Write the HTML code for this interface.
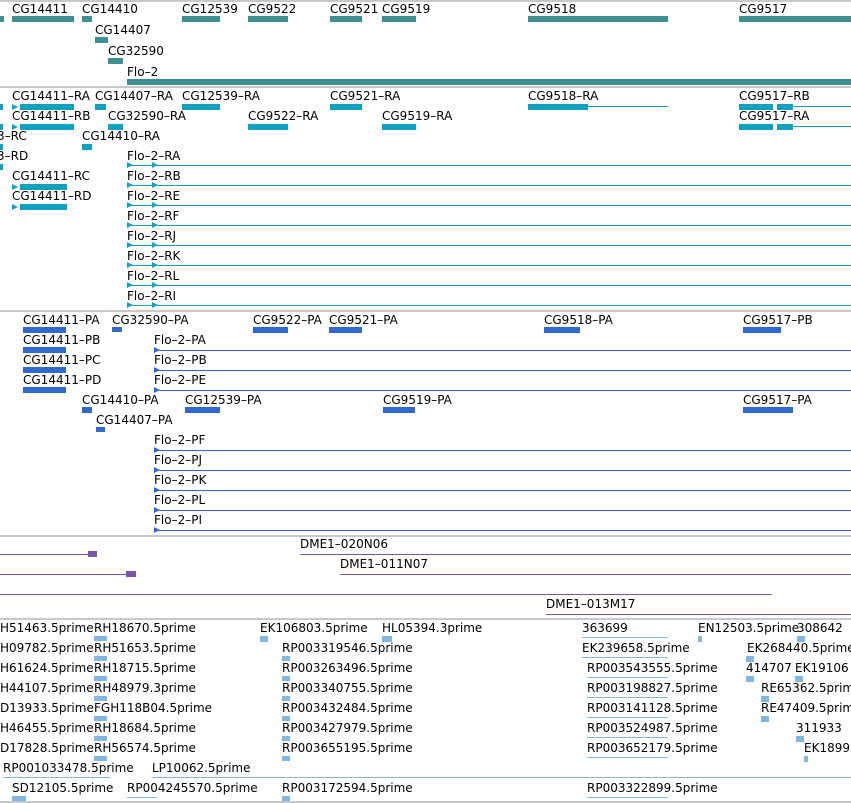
<!DOCTYPE html>
<html><head><meta charset="utf-8"><style>
html,body{margin:0;padding:0;background:#fff;width:851px;height:803px;overflow:hidden;position:relative}
.l{position:absolute;font-family:"DejaVu Sans","Liberation Sans",sans-serif;font-size:12px;line-height:14px;white-space:nowrap;color:#000}
.b{position:absolute;height:6px}
.n{position:absolute;height:1px}
.s{position:absolute;left:0;width:851px;height:2px;background:#c8c8c8}
.t1{background:#3f9191}.t2{background:#0ea0c0}.t3{background:#3068cc}.t4{background:#7755aa}.t5{background:#80b8e0}
.ar{position:absolute;width:0;height:0;border-top:3px solid transparent;border-bottom:3px solid transparent;border-left:6px solid #0ea0c0}
.ar3{position:absolute;width:0;height:0;border-top:3px solid transparent;border-bottom:3px solid transparent;border-left:6px solid #3068cc}
</style></head><body>
<div class="s" style="top:0"></div>
<div class="b t1" style="left:0;top:16px;width:4px"></div>
<div class="l" style="left:12px;top:2px">CG14411</div><div class="b t1" style="left:12px;top:16px;width:62px"></div>
<div class="l" style="left:82px;top:2px">CG14410</div><div class="b t1" style="left:82px;top:16px;width:10px"></div>
<div class="l" style="left:182px;top:2px">CG12539</div><div class="b t1" style="left:182px;top:16px;width:38px"></div>
<div class="l" style="left:248px;top:2px">CG9522</div><div class="b t1" style="left:248px;top:16px;width:40px"></div>
<div class="l" style="left:330px;top:2px">CG9521</div><div class="b t1" style="left:330px;top:16px;width:32px"></div>
<div class="l" style="left:382px;top:2px">CG9519</div><div class="b t1" style="left:382px;top:16px;width:34px"></div>
<div class="l" style="left:528px;top:2px">CG9518</div><div class="b t1" style="left:528px;top:16px;width:140px"></div>
<div class="l" style="left:739px;top:2px">CG9517</div><div class="b t1" style="left:739px;top:16px;width:112px"></div>
<div class="l" style="left:95px;top:23px">CG14407</div><div class="b t1" style="left:95px;top:37px;width:13px"></div>
<div class="l" style="left:108px;top:44px">CG32590</div><div class="b t1" style="left:108px;top:58px;width:15px"></div>
<div class="l" style="left:127px;top:65px">Flo–2</div><div class="b t1" style="left:127px;top:79px;width:724px"></div>
<div class="s" style="top:86px"></div>
<div class="b t2" style="left:0;top:104px;width:3px"></div>
<div class="l" style="left:12px;top:89px">CG14411–RA</div><div class="b t2" style="left:20px;top:104px;width:54px"></div><div class="ar" style="left:12px;top:104px"></div>
<div class="l" style="left:95px;top:89px">CG14407–RA</div><div class="b t2" style="left:95px;top:104px;width:11px"></div>
<div class="l" style="left:182px;top:89px">CG12539–RA</div><div class="b t2" style="left:182px;top:104px;width:38px"></div>
<div class="l" style="left:330px;top:89px">CG9521–RA</div><div class="b t2" style="left:330px;top:104px;width:32px"></div>
<div class="l" style="left:528px;top:89px">CG9518–RA</div><div class="b t2" style="left:528px;top:104px;width:60px"></div><div class="n t2" style="left:588px;top:106px;width:80px"></div>
<div class="l" style="left:739px;top:89px">CG9517–RB</div><div class="b t2" style="left:739px;top:104px;width:34px"></div><div class="b t2" style="left:777px;top:104px;width:16px"></div><div class="n t2" style="left:793px;top:106px;width:58px"></div>
<div class="b t2" style="left:0;top:124px;width:3px"></div>
<div class="l" style="left:12px;top:109px">CG14411–RB</div><div class="b t2" style="left:20px;top:124px;width:54px"></div><div class="ar" style="left:12px;top:124px"></div>
<div class="l" style="left:108px;top:109px">CG32590–RA</div><div class="b t2" style="left:108px;top:124px;width:15px"></div>
<div class="l" style="left:248px;top:109px">CG9522–RA</div><div class="b t2" style="left:248px;top:124px;width:40px"></div>
<div class="l" style="left:382px;top:109px">CG9519–RA</div><div class="b t2" style="left:382px;top:124px;width:34px"></div>
<div class="l" style="left:739px;top:109px">CG9517–RA</div><div class="b t2" style="left:739px;top:124px;width:34px"></div><div class="b t2" style="left:777px;top:124px;width:16px"></div><div class="n t2" style="left:793px;top:126px;width:58px"></div>
<div class="l" style="left:-3px;top:129px">3–RC</div><div class="b t2" style="left:0;top:144px;width:3px"></div>
<div class="l" style="left:82px;top:129px">CG14410–RA</div><div class="b t2" style="left:82px;top:144px;width:10px"></div>
<div class="l" style="left:-3px;top:149px">3–RD</div><div class="b t2" style="left:0;top:164px;width:3px"></div>
<div class="l" style="left:12px;top:169px">CG14411–RC</div><div class="b t2" style="left:20px;top:184px;width:47px"></div><div class="ar" style="left:12px;top:184px"></div>
<div class="l" style="left:12px;top:189px">CG14411–RD</div><div class="b t2" style="left:20px;top:204px;width:47px"></div><div class="ar" style="left:12px;top:204px"></div>
<div class="l" style="left:127px;top:149px">Flo–2–RA</div><div class="n t2" style="left:127px;top:165px;width:724px"></div><div class="ar" style="left:127px;top:162px"></div><div class="ar" style="left:152px;top:162px"></div>
<div class="l" style="left:127px;top:169px">Flo–2–RB</div><div class="n t2" style="left:127px;top:185px;width:724px"></div><div class="ar" style="left:127px;top:182px"></div><div class="ar" style="left:152px;top:182px"></div>
<div class="l" style="left:127px;top:189px">Flo–2–RE</div><div class="n t2" style="left:127px;top:205px;width:724px"></div><div class="ar" style="left:127px;top:202px"></div><div class="ar" style="left:152px;top:202px"></div>
<div class="l" style="left:127px;top:209px">Flo–2–RF</div><div class="n t2" style="left:127px;top:225px;width:724px"></div><div class="ar" style="left:127px;top:222px"></div><div class="ar" style="left:152px;top:222px"></div>
<div class="l" style="left:127px;top:229px">Flo–2–RJ</div><div class="n t2" style="left:127px;top:245px;width:724px"></div><div class="ar" style="left:127px;top:242px"></div><div class="ar" style="left:152px;top:242px"></div>
<div class="l" style="left:127px;top:249px">Flo–2–RK</div><div class="n t2" style="left:127px;top:265px;width:724px"></div><div class="ar" style="left:127px;top:262px"></div><div class="ar" style="left:152px;top:262px"></div>
<div class="l" style="left:127px;top:269px">Flo–2–RL</div><div class="n t2" style="left:127px;top:285px;width:724px"></div><div class="ar" style="left:127px;top:282px"></div><div class="ar" style="left:152px;top:282px"></div>
<div class="l" style="left:127px;top:289px">Flo–2–RI</div><div class="n t2" style="left:127px;top:305px;width:724px"></div><div class="ar" style="left:127px;top:302px"></div><div class="ar" style="left:152px;top:302px"></div>
<div class="s" style="top:310px"></div>
<div class="l" style="left:23px;top:313px">CG14411–PA</div><div class="b t3" style="left:23px;top:327px;width:43px"></div>
<div class="l" style="left:112px;top:313px">CG32590–PA</div><div class="b t3" style="left:112px;top:327px;width:10px;height:5px"></div>
<div class="l" style="left:253px;top:313px">CG9522–PA</div><div class="b t3" style="left:253px;top:327px;width:35px"></div>
<div class="l" style="left:329px;top:313px">CG9521–PA</div><div class="b t3" style="left:329px;top:327px;width:33px"></div>
<div class="l" style="left:544px;top:313px">CG9518–PA</div><div class="b t3" style="left:544px;top:327px;width:36px"></div>
<div class="l" style="left:743px;top:313px">CG9517–PB</div><div class="b t3" style="left:743px;top:327px;width:38px"></div>
<div class="l" style="left:23px;top:333px">CG14411–PB</div><div class="b t3" style="left:23px;top:347px;width:43px"></div>
<div class="l" style="left:23px;top:353px">CG14411–PC</div><div class="b t3" style="left:23px;top:367px;width:43px"></div>
<div class="l" style="left:23px;top:373px">CG14411–PD</div><div class="b t3" style="left:23px;top:387px;width:43px"></div>
<div class="l" style="left:154px;top:333px">Flo–2–PA</div><div class="n t3" style="left:154px;top:350px;width:697px"></div><div class="ar3" style="left:154px;top:347px"></div>
<div class="l" style="left:154px;top:353px">Flo–2–PB</div><div class="n t3" style="left:154px;top:370px;width:697px"></div><div class="ar3" style="left:154px;top:367px"></div>
<div class="l" style="left:154px;top:373px">Flo–2–PE</div><div class="n t3" style="left:154px;top:390px;width:697px"></div><div class="ar3" style="left:154px;top:387px"></div>
<div class="l" style="left:82px;top:393px">CG14410–PA</div><div class="b t3" style="left:82px;top:407px;width:10px"></div>
<div class="l" style="left:185px;top:393px">CG12539–PA</div><div class="b t3" style="left:185px;top:407px;width:35px"></div>
<div class="l" style="left:383px;top:393px">CG9519–PA</div><div class="b t3" style="left:383px;top:407px;width:32px"></div>
<div class="l" style="left:743px;top:393px">CG9517–PA</div><div class="b t3" style="left:743px;top:407px;width:50px"></div>
<div class="l" style="left:96px;top:413px">CG14407–PA</div><div class="b t3" style="left:96px;top:427px;width:9px;height:5px"></div>
<div class="l" style="left:154px;top:433px">Flo–2–PF</div><div class="n t3" style="left:154px;top:450px;width:697px"></div><div class="ar3" style="left:154px;top:447px"></div>
<div class="l" style="left:154px;top:453px">Flo–2–PJ</div><div class="n t3" style="left:154px;top:470px;width:697px"></div><div class="ar3" style="left:154px;top:467px"></div>
<div class="l" style="left:154px;top:473px">Flo–2–PK</div><div class="n t3" style="left:154px;top:490px;width:697px"></div><div class="ar3" style="left:154px;top:487px"></div>
<div class="l" style="left:154px;top:493px">Flo–2–PL</div><div class="n t3" style="left:154px;top:510px;width:697px"></div><div class="ar3" style="left:154px;top:507px"></div>
<div class="l" style="left:154px;top:513px">Flo–2–PI</div><div class="n t3" style="left:154px;top:530px;width:697px"></div><div class="ar3" style="left:154px;top:527px"></div>
<div class="s" style="top:535px"></div>
<div class="n t4" style="left:0;top:554px;width:90px"></div><div class="b t4" style="left:88px;top:551px;width:9px"></div>
<div class="l" style="left:300px;top:537px">DME1–020N06</div><div class="n t4" style="left:300px;top:554px;width:551px"></div>
<div class="n t4" style="left:0;top:574px;width:130px"></div><div class="b t4" style="left:126px;top:571px;width:10px"></div>
<div class="l" style="left:340px;top:557px">DME1–011N07</div><div class="n t4" style="left:340px;top:574px;width:511px"></div>
<div class="n t4" style="left:0;top:594px;width:772px"></div>
<div class="l" style="left:546px;top:597px">DME1–013M17</div><div class="n t4" style="left:546px;top:614px;width:305px"></div>
<div class="s" style="top:618px"></div>
<div class="l" style="left:0;top:621px">H51463.5prime</div>
<div class="l" style="left:0;top:641px">H09782.5prime</div>
<div class="l" style="left:0;top:661px">H61624.5prime</div>
<div class="l" style="left:0;top:681px">H44107.5prime</div>
<div class="l" style="left:0;top:701px">D13933.5prime</div>
<div class="l" style="left:0;top:721px">H46455.5prime</div>
<div class="l" style="left:0;top:741px">D17828.5prime</div>
<div class="l" style="left:94px;top:621px">RH18670.5prime</div><div class="b t5" style="left:94px;top:636px;width:13px;height:5px"></div>
<div class="l" style="left:94px;top:641px">RH51653.5prime</div><div class="b t5" style="left:94px;top:656px;width:13px;height:5px"></div>
<div class="l" style="left:94px;top:661px">RH18715.5prime</div><div class="b t5" style="left:94px;top:676px;width:13px;height:5px"></div>
<div class="l" style="left:94px;top:681px">RH48979.3prime</div><div class="b t5" style="left:94px;top:696px;width:13px;height:5px"></div>
<div class="l" style="left:94px;top:701px">FGH118B04.5prime</div><div class="b t5" style="left:94px;top:716px;width:13px;height:5px"></div>
<div class="l" style="left:94px;top:721px">RH18684.5prime</div><div class="b t5" style="left:94px;top:736px;width:13px;height:5px"></div>
<div class="l" style="left:94px;top:741px">RH56574.5prime</div><div class="b t5" style="left:94px;top:756px;width:13px;height:5px"></div>
<div class="l" style="left:260px;top:621px">EK106803.5prime</div><div class="b t5" style="left:260px;top:636px;width:8px"></div>
<div class="l" style="left:382px;top:621px">HL05394.3prime</div><div class="b t5" style="left:382px;top:636px;width:10px"></div>
<div class="l" style="left:282px;top:641px">RP003319546.5prime</div><div class="b t5" style="left:282px;top:656px;width:8px;height:5px"></div>
<div class="l" style="left:282px;top:661px">RP003263496.5prime</div><div class="b t5" style="left:282px;top:676px;width:8px;height:5px"></div>
<div class="l" style="left:282px;top:681px">RP003340755.5prime</div><div class="b t5" style="left:282px;top:696px;width:8px;height:5px"></div>
<div class="l" style="left:282px;top:701px">RP003432484.5prime</div><div class="b t5" style="left:282px;top:716px;width:8px;height:5px"></div>
<div class="l" style="left:282px;top:721px">RP003427979.5prime</div><div class="b t5" style="left:282px;top:736px;width:8px;height:5px"></div>
<div class="l" style="left:282px;top:741px">RP003655195.5prime</div><div class="b t5" style="left:282px;top:756px;width:8px;height:5px"></div>
<div class="l" style="left:582px;top:621px">363699</div><div class="n t5" style="left:582px;top:637px;width:86px"></div>
<div class="l" style="left:582px;top:641px">EK239658.5prime</div><div class="n t5" style="left:582px;top:657px;width:86px"></div>
<div class="l" style="left:587px;top:661px">RP003543555.5prime</div><div class="n t5" style="left:587px;top:677px;width:81px"></div>
<div class="l" style="left:587px;top:681px">RP003198827.5prime</div><div class="n t5" style="left:587px;top:697px;width:81px"></div>
<div class="l" style="left:587px;top:701px">RP003141128.5prime</div><div class="n t5" style="left:587px;top:717px;width:81px"></div>
<div class="l" style="left:587px;top:721px">RP003524987.5prime</div><div class="n t5" style="left:587px;top:737px;width:81px"></div>
<div class="l" style="left:587px;top:741px">RP003652179.5prime</div><div class="n t5" style="left:587px;top:757px;width:81px"></div>
<div class="l" style="left:698px;top:621px">EN12503.5prime</div><div class="b t5" style="left:698px;top:636px;width:4px"></div>
<div class="l" style="left:797px;top:621px">308642</div><div class="b t5" style="left:797px;top:636px;width:8px"></div>
<div class="l" style="left:747px;top:641px">EK268440.5prime</div><div class="b t5" style="left:746px;top:656px;width:8px"></div>
<div class="l" style="left:746px;top:661px">414707</div><div class="b t5" style="left:746px;top:676px;width:8px"></div>
<div class="l" style="left:795px;top:661px">EK19106</div><div class="b t5" style="left:795px;top:676px;width:8px"></div>
<div class="l" style="left:761px;top:681px">RE65362.5prime</div><div class="b t5" style="left:761px;top:696px;width:8px"></div>
<div class="l" style="left:761px;top:701px">RE47409.5prime</div><div class="b t5" style="left:761px;top:716px;width:8px"></div>
<div class="l" style="left:796px;top:721px">311933</div><div class="b t5" style="left:796px;top:736px;width:8px"></div>
<div class="l" style="left:804px;top:741px">EK1899</div><div class="b t5" style="left:804px;top:756px;width:4px"></div>
<div class="l" style="left:3px;top:761px">RP001033478.5prime</div><div class="n t5" style="left:3px;top:777px;width:107px"></div>
<div class="l" style="left:152px;top:761px">LP10062.5prime</div><div class="n t5" style="left:152px;top:777px;width:699px"></div>
<div class="l" style="left:12px;top:781px">SD12105.5prime</div><div class="b t5" style="left:12px;top:796px;width:14px;height:5px"></div>
<div class="l" style="left:127px;top:781px">RP004245570.5prime</div><div class="n t5" style="left:127px;top:797px;width:30px"></div>
<div class="l" style="left:282px;top:781px">RP003172594.5prime</div><div class="b t5" style="left:282px;top:796px;width:8px;height:5px"></div>
<div class="l" style="left:587px;top:781px">RP003322899.5prime</div><div class="n t5" style="left:587px;top:797px;width:81px"></div>
<div class="s" style="top:801px"></div>
</body></html>
